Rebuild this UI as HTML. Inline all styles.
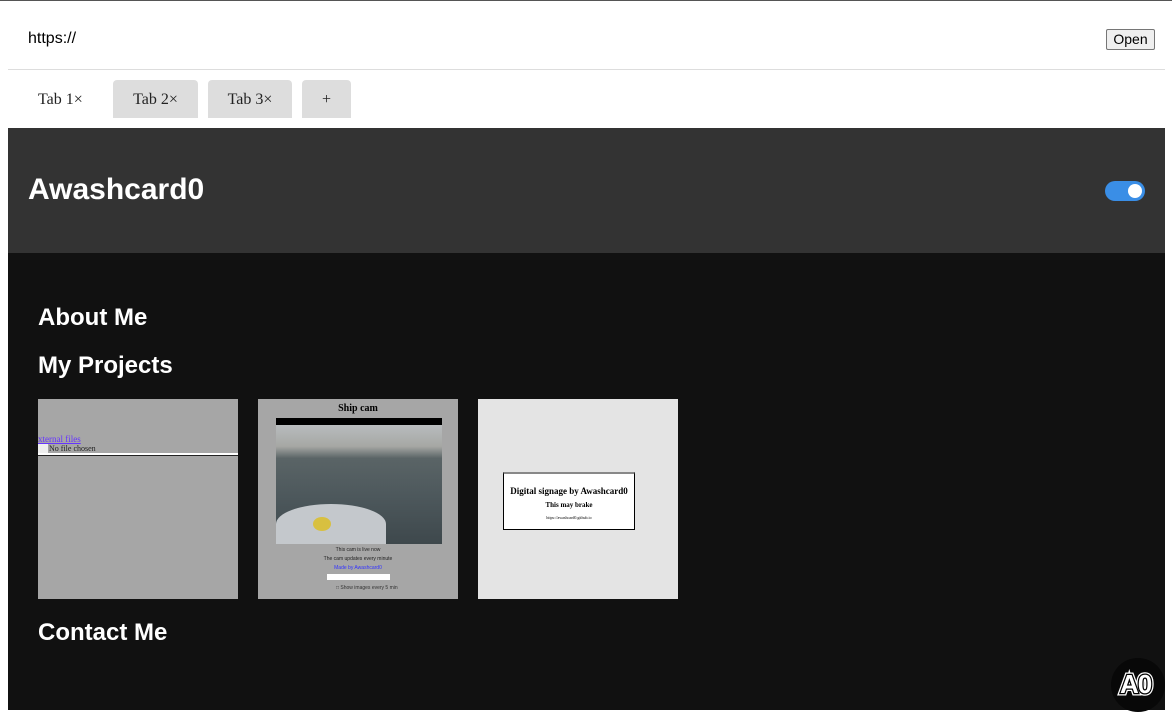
<!DOCTYPE html>
<html><head><style>
*{margin:0;padding:0;box-sizing:border-box}
body{width:1172px;height:717px;background:#fff;position:relative;overflow:hidden;font-family:"Liberation Sans",sans-serif}
.a{position:absolute}
</style></head><body>
<div class="a" style="left:0;top:0;width:1172px;height:1px;background:#555"></div>
<div class="a" style="left:28px;top:30px;font-size:16px;color:#000">https://</div>
<div class="a" style="left:1106px;top:29px;width:49px;height:21px;border:1px solid #767676;border-radius:2px;background:#efefef;font-size:14px;text-align:center;line-height:19px">Open</div>
<div class="a" style="left:8px;top:69px;width:1157px;height:1px;background:#ddd"></div>
<div class="a" style="left:38px;top:91px;font:16px 'Liberation Serif',serif;color:#222">Tab 1×</div>
<div class="a" style="left:113px;top:80px;width:85px;height:38px;background:#ddd;border-radius:4px 4px 0 0;font:16px 'Liberation Serif',serif;color:#222;text-align:center;line-height:39px">Tab 2×</div>
<div class="a" style="left:208px;top:80px;width:84px;height:38px;background:#ddd;border-radius:4px 4px 0 0;font:16px 'Liberation Serif',serif;color:#222;text-align:center;line-height:39px">Tab 3×</div>
<div class="a" style="left:302px;top:80px;width:49px;height:38px;background:#ddd;border-radius:4px 4px 0 0;font:16px 'Liberation Serif',serif;color:#222;text-align:center;line-height:39px">+</div>
<div class="a" style="left:8px;top:128px;width:1157px;height:125px;background:#333"></div>
<div class="a" style="left:28px;top:173px;font-size:30px;font-weight:bold;color:#fff">Awashcard0</div>
<div class="a" style="left:1105px;top:181px;width:40px;height:20px;border-radius:10px;background:#3a8ee6"></div>
<div class="a" style="left:1128px;top:184px;width:14px;height:14px;border-radius:7px;background:#fff"></div>
<div class="a" style="left:8px;top:253px;width:1157px;height:457px;background:#111"></div>
<div class="a" style="left:38px;top:304px;font-size:24px;font-weight:bold;color:#fff">About Me</div>
<div class="a" style="left:38px;top:352px;font-size:24px;font-weight:bold;color:#fff">My Projects</div>
<div class="a" style="left:38px;top:399px;width:200px;height:200px;background:#a6a6a6">
 <div class="a" style="left:0;top:35px;font:9px 'Liberation Serif',serif;color:#6633ff;text-decoration:underline">xternal files</div>
 <div class="a" style="left:0;top:45px;width:10px;height:9px;background:#eee"></div>
 <div class="a" style="left:11px;top:45px;font:8px 'Liberation Serif',serif;color:#222">No file chosen</div>
 <div class="a" style="left:0;top:54px;width:200px;height:2px;background:#fff"></div>
 <div class="a" style="left:0;top:56px;width:200px;height:1px;background:#222"></div>
</div>
<div class="a" style="left:258px;top:399px;width:200px;height:200px;background:#a6a6a6">
 <div class="a" style="left:0;top:4px;width:200px;text-align:center;font:bold 10px 'Liberation Serif',serif">Ship cam</div>
 <div class="a" style="left:18px;top:19px;width:166px;height:7px;background:#000"></div>
 <div class="a" style="left:18px;top:26px;width:166px;height:119px;background:linear-gradient(#b8bcbe 0%,#a6a7a4 18%,#5a6466 28%,#4d585c 60%,#3e484c 100%)"></div>
 <div class="a" style="left:18px;top:105px;width:110px;height:40px;background:#c4c8cc;border-radius:60% 60% 0 0"></div>
 <div class="a" style="left:55px;top:118px;width:18px;height:14px;border-radius:50%;background:#d8c040"></div>
 <div class="a" style="left:0;top:147px;width:200px;text-align:center;font:5px sans-serif;color:#222;line-height:9px">This cam is live now<br>The cam updates every minute<br><span style="color:#33f">Made by Awashcard0</span></div>
 <div class="a" style="left:69px;top:175px;width:63px;height:6px;background:#fff"></div>
 <div class="a" style="left:78px;top:186px;font:5px sans-serif;color:#333">□ Show images every 5 min</div>
</div>
<div class="a" style="left:478px;top:399px;width:200px;height:200px;background:#e4e4e4">
 <div class="a" style="left:25px;top:73px;width:132px;height:58px;background:#fff;border:1px solid #000;border-top:2px solid #888;text-align:center;font-family:'Liberation Serif',serif">
  <div style="font-size:9px;font-weight:bold;margin-top:12px">Digital signage by Awashcard0</div>
  <div style="font-size:7px;font-weight:bold;margin-top:5px">This may brake</div>
  <div style="font-size:4px;margin-top:6px">https://awashcard0.github.io</div>
 </div>
</div>
<div class="a" style="left:38px;top:619px;font-size:24px;font-weight:bold;color:#fff">Contact Me</div>
<div class="a" style="left:1111px;top:658px;width:54px;height:54px;border-radius:50%;background:#080808"></div>
<div class="a" style="left:1120px;top:669px;font-size:26px;font-weight:bold;color:#fff;-webkit-text-stroke:5px #fff;letter-spacing:-1px">A0</div>
<div class="a" style="left:1120px;top:669px;font-size:26px;font-weight:bold;color:#fff;-webkit-text-stroke:2.5px #000;paint-order:stroke fill;letter-spacing:-1px">A0</div>
</body></html>
